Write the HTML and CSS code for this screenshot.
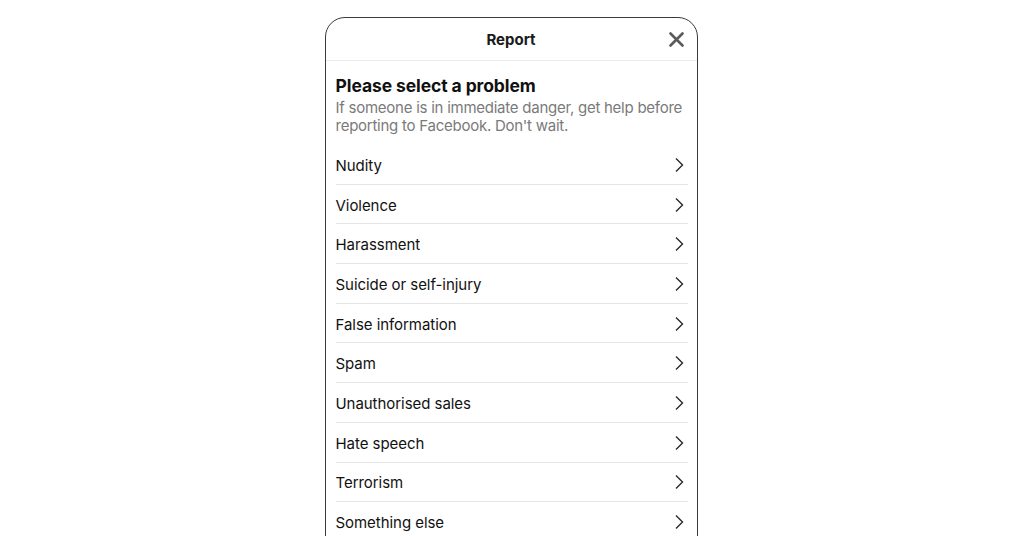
FILE: index.html
```html
<!DOCTYPE html>
<html>
<head>
<meta charset="utf-8">
<link rel="stylesheet" href="styles.css">
</head>
<body>
<div class="page">
  <div class="card">
    <div class="header">
      <span class="header-title">Report</span>
      <span class="close">
        <svg width="15" height="15" viewBox="0 0 15 15"><path d="M1.5 1.5 L13.5 13.5 M13.5 1.5 L1.5 13.5" stroke="#5a5a5a" stroke-width="2.6" stroke-linecap="round" fill="none"/></svg>
      </span>
    </div>
    <div class="content">
      <h1 class="title">Please select a problem</h1>
      <p class="subtitle">If someone is in immediate danger, get help before reporting to Facebook. Don't wait.</p>
      <ul class="list">
        <li class="row"><span>Nudity</span><svg class="chev" width="10" height="16" viewBox="0 0 10 16"><path d="M2 1.5 L8.5 8 L2 14.5" stroke="#2a2a2a" stroke-width="1.4" fill="none"/></svg></li>
        <li class="row"><span>Violence</span><svg class="chev" width="10" height="16" viewBox="0 0 10 16"><path d="M2 1.5 L8.5 8 L2 14.5" stroke="#2a2a2a" stroke-width="1.4" fill="none"/></svg></li>
        <li class="row"><span>Harassment</span><svg class="chev" width="10" height="16" viewBox="0 0 10 16"><path d="M2 1.5 L8.5 8 L2 14.5" stroke="#2a2a2a" stroke-width="1.4" fill="none"/></svg></li>
        <li class="row"><span>Suicide or self-injury</span><svg class="chev" width="10" height="16" viewBox="0 0 10 16"><path d="M2 1.5 L8.5 8 L2 14.5" stroke="#2a2a2a" stroke-width="1.4" fill="none"/></svg></li>
        <li class="row"><span>False information</span><svg class="chev" width="10" height="16" viewBox="0 0 10 16"><path d="M2 1.5 L8.5 8 L2 14.5" stroke="#2a2a2a" stroke-width="1.4" fill="none"/></svg></li>
        <li class="row"><span>Spam</span><svg class="chev" width="10" height="16" viewBox="0 0 10 16"><path d="M2 1.5 L8.5 8 L2 14.5" stroke="#2a2a2a" stroke-width="1.4" fill="none"/></svg></li>
        <li class="row"><span>Unauthorised sales</span><svg class="chev" width="10" height="16" viewBox="0 0 10 16"><path d="M2 1.5 L8.5 8 L2 14.5" stroke="#2a2a2a" stroke-width="1.4" fill="none"/></svg></li>
        <li class="row"><span>Hate speech</span><svg class="chev" width="10" height="16" viewBox="0 0 10 16"><path d="M2 1.5 L8.5 8 L2 14.5" stroke="#2a2a2a" stroke-width="1.4" fill="none"/></svg></li>
        <li class="row"><span>Terrorism</span><svg class="chev" width="10" height="16" viewBox="0 0 10 16"><path d="M2 1.5 L8.5 8 L2 14.5" stroke="#2a2a2a" stroke-width="1.4" fill="none"/></svg></li>
        <li class="row"><span>Something else</span><svg class="chev" width="10" height="16" viewBox="0 0 10 16"><path d="M2 1.5 L8.5 8 L2 14.5" stroke="#2a2a2a" stroke-width="1.4" fill="none"/></svg></li>
      </ul>
    </div>
  </div>
</div>
</body>
</html>
```

FILE: styles.css
```css
html, body {
  margin: 0;
  padding: 0;
  background: #ffffff;
  height: 536px;
  overflow: hidden;
}

.page {
  display: flex;
  justify-content: center;
  padding-top: 17px;
  font-family: Inter, "Liberation Sans", Arial, sans-serif;
  color: #1c1c1c;
}

.card {
  width: 371px;
  height: 600px;
  border: 1px solid #3a3a3a;
  border-radius: 20px;
  box-sizing: content-box;
  margin-right: 2px;
}

.header {
  height: 42px;
  display: flex;
  align-items: center;
  justify-content: center;
  position: relative;
  border-bottom: 1px solid #ebebeb;
}

.header-title {
  font-size: 15px;
  font-weight: 700;
  color: #1a1a1a;
  margin-top: 1px;
}

.close {
  position: absolute;
  right: 13px;
  top: 14px;
  display: flex;
}

.content {
  padding: 0 9px 0 10px;
}

.title {
  margin: 13px 0 0 0;
  font-size: 17.5px;
  font-weight: 700;
  line-height: 24px;
  color: #111;
  letter-spacing: -0.1px;
}

.subtitle {
  margin: 1px 0 0 0;
  font-size: 15px;
  line-height: 18px;
  color: #7a7a7a;
  letter-spacing: -0.25px;
}

.list {
  list-style: none;
  margin: 10px 0 0 0;
  padding: 0;
}

.row {
  height: 38.7px;
  border-bottom: 1px solid #e6e6e6;
  display: flex;
  align-items: center;
  justify-content: space-between;
  font-size: 15px;
  color: #111;
}

.row span {
  margin-top: 2px;
  letter-spacing: -0.05px;
}

.chev {
  margin-right: 4px;
  margin-top: 1px;
}
```
